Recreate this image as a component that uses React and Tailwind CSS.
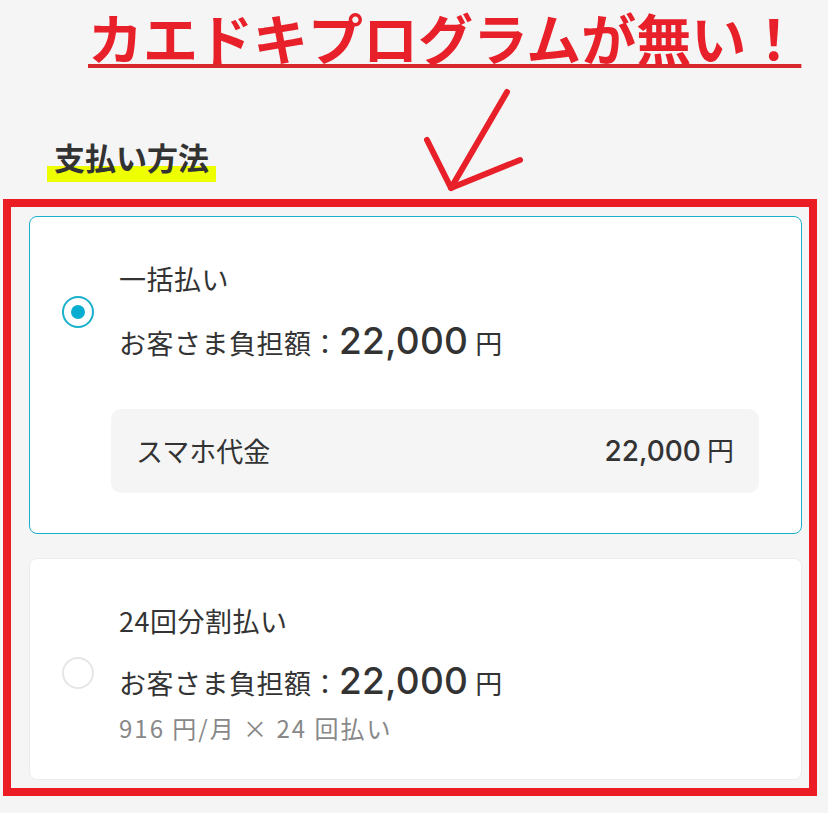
import React from 'react';

const RED = '#e8202a';

const Radio = ({ checked }) => (
  <div
    className={`w-[32px] h-[32px] shrink-0 rounded-full flex items-center justify-center bg-white ${
      checked ? 'border-2 border-[#1ab0cc]' : 'border-2 border-[#e6e6e6]'
    }`}
  >
    {checked && <div className="w-[14px] h-[14px] rounded-full bg-[#08aed0]"></div>}
  </div>
);

const Amount = () => (
  <div className="flex items-baseline leading-none">
    <span className="text-[27px] tracking-[0.5px]">お客さま負担額：</span>
    <span className="text-[37px] font-medium font-['Inter',sans-serif] tracking-[0.3px]">22,000</span>
    <span className="text-[27px] ml-[7px]">円</span>
  </div>
);

export default function App() {
  return (
    <div className="relative min-h-screen bg-[#f5f5f5] text-[#333] font-['Noto_Sans_CJK_JP',sans-serif]">
      {/* annotation header */}
      <div className="pt-[8px] pl-[88px] text-[55px] leading-[56px] font-bold text-[#e8202a] underline decoration-4 underline-offset-[4px] decoration-[#d8262d]">
        カエドキプログラムが無い！
      </div>

      {/* arrow */}
      <svg
        className="absolute left-[400px] top-[80px]"
        width="140"
        height="120"
        viewBox="0 0 140 120"
        fill="none"
        stroke={RED}
        strokeWidth="6"
        strokeLinecap="round"
        strokeLinejoin="round"
      >
        <path d="M107 12 L51 108" />
        <path d="M27 60 L51 108 L120 80" />
      </svg>

      {/* section heading */}
      <div className="pt-[75px] pl-[47px]">
        <span className="inline-block px-[7px] pb-[7px] text-[31px] leading-[36px] font-bold bg-[linear-gradient(transparent_63%,#edff00_63%)]">
          支払い方法
        </span>
      </div>

      {/* payment options, framed in red */}
      <div className="mt-[17px] ml-[3px] w-[814px] border-[8px] border-[#ec1c24] pt-[9px] pl-[18px] pr-[7px] pb-[8px]">
        <div className="bg-white border border-[#1ab0cc] rounded-[8px] pt-[42px] pb-[40px] pl-[32px] pr-[42px]">
          <div className="flex items-center">
            <div className="pt-[5px]">
              <Radio checked />
            </div>
            <div className="ml-[25px]">
              <div className="text-[27px] leading-[39px] tracking-[0.5px]">一括払い</div>
              <div className="mt-[24px]">
                <Amount />
              </div>
            </div>
          </div>
          <div className="mt-[50px] ml-[49px] h-[84px] bg-[#f5f5f5] rounded-[10px] px-[25px] flex items-center justify-between">
            <span className="text-[27px]">スマホ代金</span>
            <span className="text-[27px]">
              <span className="font-['Inter',sans-serif] font-medium text-[28px]">22,000</span> 円
            </span>
          </div>
        </div>

        <div className="mt-[24px] bg-white border border-[#ececec] rounded-[8px] pt-[42px] pb-[35px] pl-[32px] pr-[42px]">
          <div className="flex items-center">
            <Radio />
            <div className="ml-[25px]">
              <div className="text-[27px] leading-[39px] tracking-[0.5px]">24回分割払い</div>
              <div className="mt-[22px]">
                <Amount />
              </div>
              <div className="mt-[12px] text-[24px] leading-[33px] tracking-[2px] text-[#888]">916 円/月 × 24 回払い</div>
            </div>
          </div>
        </div>
      </div>
    </div>
  );
}
